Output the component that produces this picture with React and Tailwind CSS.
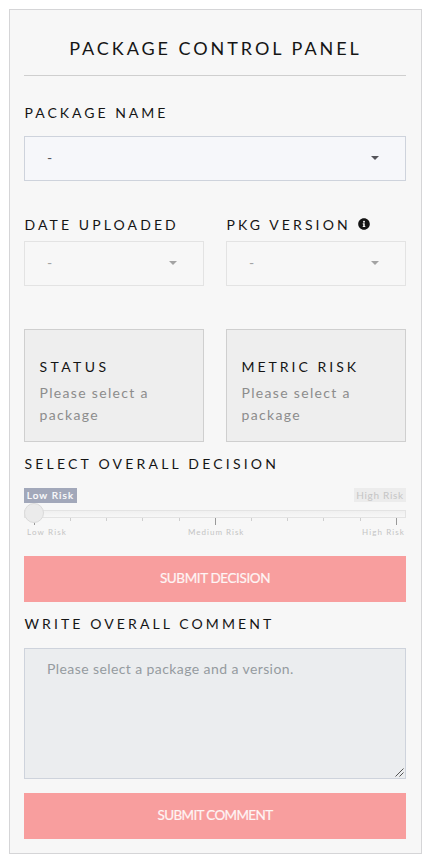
const HEADING = "text-[14px] leading-[20px] whitespace-nowrap text-[#151515]";

function Caret() {
  return (
    <svg width="8" height="4" viewBox="0 0 8 4" fill="currentColor">
      <path d="M0 0h8L4 4z" />
    </svg>
  );
}

function Select({ disabled }) {
  return (
    <div
      className={
        "flex h-[45px] items-center justify-between border pr-[26px] pb-[2px] pl-[22px] text-[14px] " +
        (disabled ? "border-[#e3e3e3] bg-[#f7f7f7] text-[#a3a3a3]" : "border-[#ced3dc] bg-[#f6f7fa] text-[#55555a]")
      }
    >
      <span className="leading-[20px]">-</span>
      <Caret />
    </div>
  );
}

function InfoCard({ title, spacing }) {
  return (
    <div className="h-[113px] border border-[#cfcfcf] bg-[#eeeeee] pt-[27px] pl-[14.5px]">
      <div className={HEADING + " " + spacing}>{title}</div>
      <p className="mt-[5px] text-[14px] leading-[22px] tracking-[1.33px] text-[#8c8c8c]">
        Please select a<br />package
      </p>
    </div>
  );
}

function SubmitButton({ children, spacing }) {
  return (
    <button className={"flex h-[46px] w-full items-center justify-center bg-[#f89e9e] pb-[2px] text-[#fef5f5] [-webkit-text-stroke:0.2px_#fef5f5] " + spacing}>
      {children}
    </button>
  );
}

const TICKS = [
  "left-[10px] h-[7px] bg-[#999]",
  "left-[46px] h-[3px] bg-[#cfcfcf]",
  "left-[82px] h-[3px] bg-[#cfcfcf]",
  "left-[118px] h-[3px] bg-[#cfcfcf]",
  "left-[155px] h-[3px] bg-[#cfcfcf]",
  "left-[191px] h-[7px] bg-[#999]",
  "left-[227px] h-[3px] bg-[#cfcfcf]",
  "left-[263px] h-[3px] bg-[#cfcfcf]",
  "left-[299px] h-[3px] bg-[#cfcfcf]",
  "left-[336px] h-[3px] bg-[#cfcfcf]",
  "left-[372px] h-[7px] bg-[#999]",
];

function RiskSlider() {
  return (
    <div className="mt-[14px] h-[68px]">
      <div className="flex h-[22px] items-start justify-between text-[10px]">
        <span className="flex h-[15px] w-[53px] items-center justify-center bg-[#a2a8ba] tracking-[1.1px] text-white [-webkit-text-stroke:0.2px_white]">
          Low Risk
        </span>
        <span className="flex h-[14px] w-[52px] items-center justify-center bg-[#ececec] tracking-[0.7px] text-[#c5c5c5]">
          High Risk
        </span>
      </div>
      <div className="relative h-[8px] border border-[#e3e3e3] bg-linear-to-b from-[#f0f0f0] to-[#f7f7f7]">
        {TICKS.map((tick) => (
          <span key={tick} className={"absolute top-[7px] -ml-px w-px " + tick} />
        ))}
        <span className="absolute -top-[8px] -left-px size-[20px] rounded-full border border-[#dadada] bg-[#ebebeb]" />
      </div>
      <div className="mt-[9px] flex h-[10px] items-center pr-px pl-[3px] text-[8px] leading-[10px] tracking-[1.15px] whitespace-nowrap text-[#c4c4c4]">
        <span className="w-[161px]">Low Risk</span>
        <span className="flex-1 tracking-[1px]">Medium Risk</span>
        <span className="tracking-[1.1px]">High Risk</span>
      </div>
    </div>
  );
}

export default function App() {
  return (
    <div className="h-[866px] w-[432px] bg-white p-[9px] font-['Lato','Noto_Sans',sans-serif]">
      <main className="h-[845px] w-[413px] border border-[#d5d5d7] bg-[#f7f7f7] pr-[15px] pl-[14px]">
        <h1 className="flex h-[66px] items-center justify-center border-b border-[#cfcfcf] pt-[12px] pl-px text-[18px] tracking-[2.95px] whitespace-nowrap text-[#151515]">
          PACKAGE CONTROL PANEL
        </h1>
        <div className={HEADING + " mt-[27px] pl-[0.5px] tracking-[3px]"}>PACKAGE NAME</div>
        <div className="mt-[13px]">
          <Select />
        </div>
        <div className="mt-[34px] grid grid-cols-2 gap-[22px]">
          <div>
            <div className={HEADING + " mb-[6px] pl-[0.5px] tracking-[3.1px]"}>DATE UPLOADED</div>
            <Select disabled />
          </div>
          <div>
            <div className={HEADING + " mb-[6px] flex pl-[0.5px] tracking-[3.1px]"}>
              <span className="w-[131px]">PKG VERSION</span>
              <svg className="mt-[3px]" width="12" height="12" viewBox="0 0 512 512" fill="currentColor">
                <path d="M256 8C119 8 8 119 8 256s111 248 248 248 248-111 248-248S393 8 256 8zm0 110a42 42 0 1 1 0 84 42 42 0 0 1 0-84zm56 254a12 12 0 0 1-12 12h-88a12 12 0 0 1-12-12v-24a12 12 0 0 1 12-12h12v-64h-12a12 12 0 0 1-12-12v-24a12 12 0 0 1 12-12h64a12 12 0 0 1 12 12v100h12a12 12 0 0 1 12 12z" />
              </svg>
            </div>
            <Select disabled />
          </div>
        </div>
        <div className="mt-[43px] grid grid-cols-2 gap-[22px]">
          <InfoCard title="STATUS" spacing="tracking-[3.4px]" />
          <InfoCard title="METRIC RISK" spacing="tracking-[3px]" />
        </div>
        <div className={HEADING + " mt-[12px] pl-[0.5px] tracking-[3.2px]"}>SELECT OVERALL DECISION</div>
        <RiskSlider />
        <SubmitButton spacing="text-[13.5px] tracking-[-0.4px]">SUBMIT DECISION</SubmitButton>
        <div className={HEADING + " mt-[12px] pl-[0.5px] tracking-[3.1px]"}>WRITE OVERALL COMMENT</div>
        <div className="mt-[14px] flex h-[131px] items-start justify-between border border-[#ced3dc] bg-[#ebedef] pl-[22px] text-[14px] text-[#959ba0]">
          <span className="mt-[10px] leading-[20px] tracking-[0.41px]">Please select a package and a version.</span>
          <svg className="mr-px mb-px self-end" width="9" height="9" viewBox="0 0 9 9" stroke="#555" fill="none">
            <path d="M.5 8.500l8-8M4.500 8.500l4-4" />
          </svg>
        </div>
        <div className="mt-[14px]">
          <SubmitButton spacing="text-[13.5px] tracking-[-0.65px]">SUBMIT COMMENT</SubmitButton>
        </div>
      </main>
    </div>
  );
}
